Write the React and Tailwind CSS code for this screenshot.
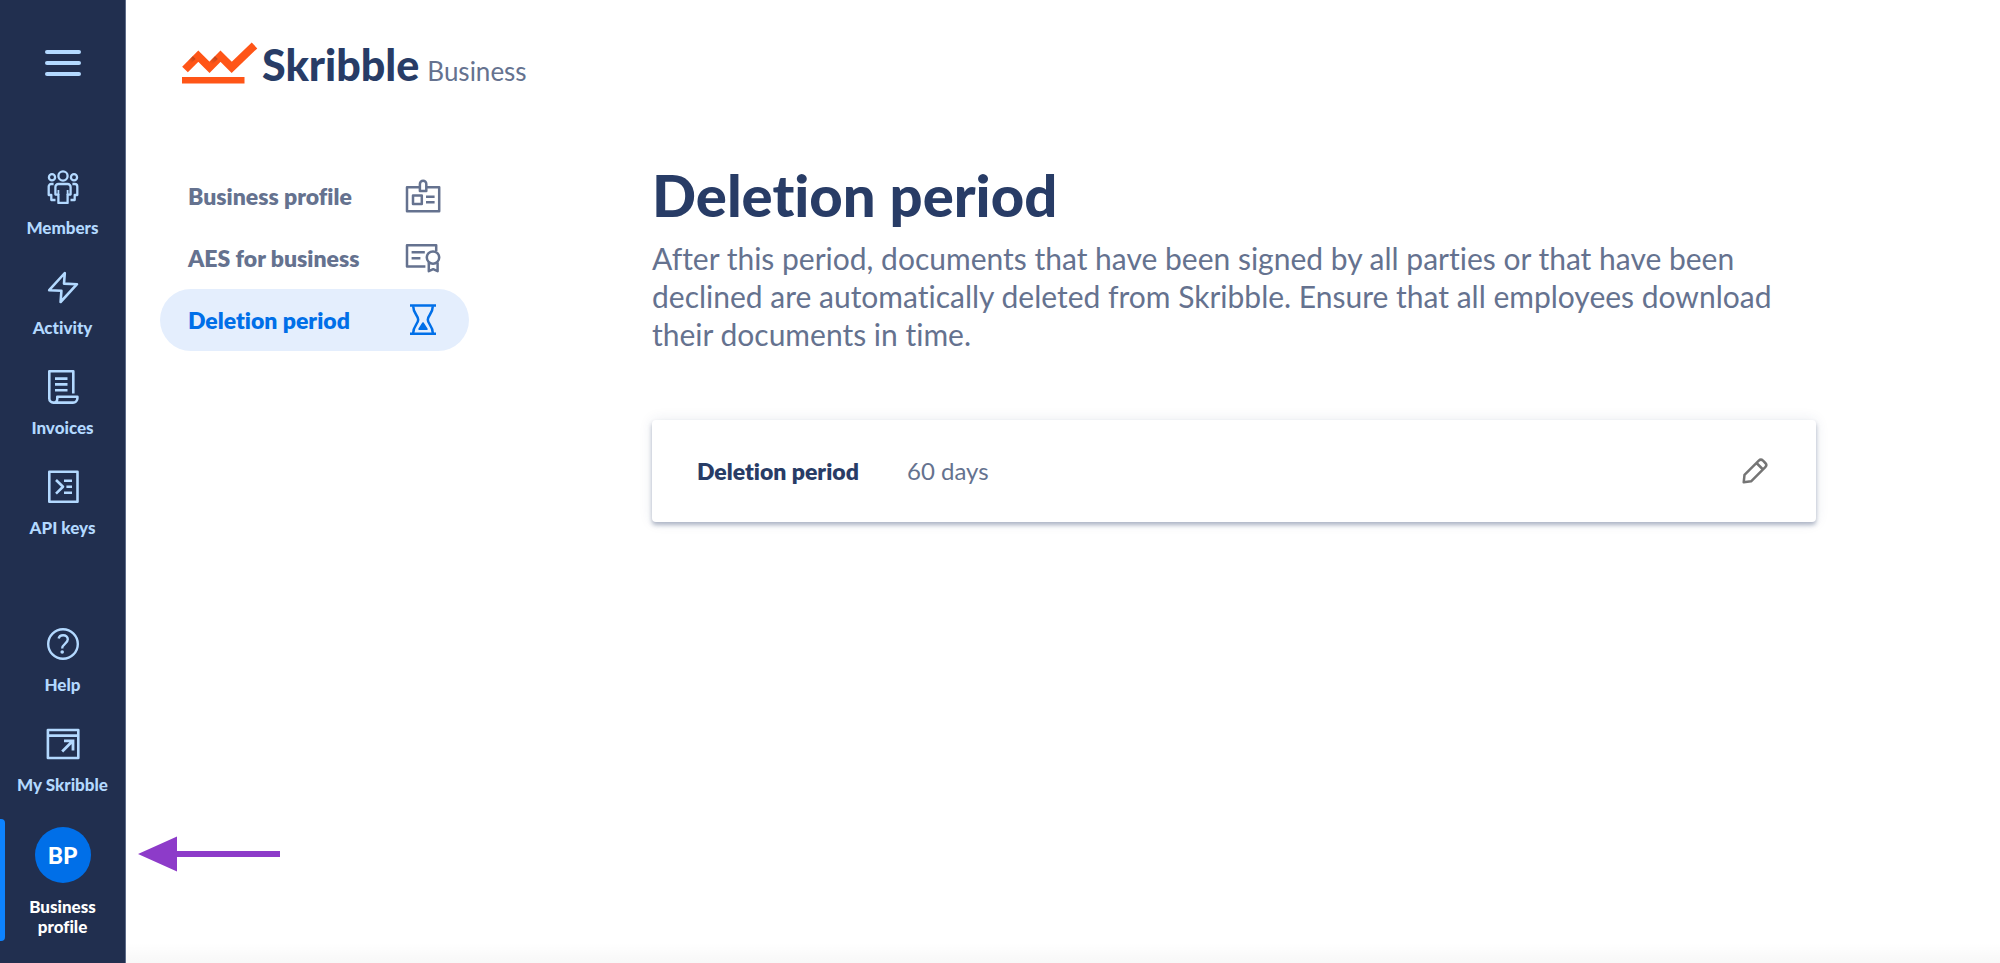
function MembersIcon() {
  return (
    <svg className="size-[34px]" viewBox="0 0 34 34" fill="none" stroke="currentColor" strokeWidth="2.3" strokeLinejoin="round" aria-hidden="true">
      <circle cx="17" cy="6" r="4.6" />
      <circle cx="6" cy="7.2" r="3.1" />
      <circle cx="28" cy="7.2" r="3.1" />
      <path d="M12.4 14h9.2a3 3 0 0 1 3 3v7.6h-3V33h-9.2v-8.4h-3V17a3 3 0 0 1 3-3Z" />
      <path d="M12.4 20v5M21.6 20v5" strokeWidth="1.8" />
      <path d="M7.6 14H5.2a2.5 2.5 0 0 0-2.5 2.5V25h2.6v5h4.2M26.4 14h2.4a2.5 2.5 0 0 1 2.5 2.5V25h-2.6v5h-4.2" />
    </svg>
  );
}

function ActivityIcon() {
  return (
    <svg className="size-[34px]" viewBox="0 0 34 34" fill="none" stroke="currentColor" strokeWidth="2.6" strokeLinejoin="round" aria-hidden="true">
      <path d="M18.8 3 3.2 20.2l12.2.6-.8 11.2L31 14.2l-13-.6Z" />
    </svg>
  );
}

function InvoicesIcon() {
  return (
    <svg className="size-[34px]" viewBox="0 0 34 34" fill="none" stroke="currentColor" strokeWidth="2.6" strokeLinejoin="round" aria-hidden="true">
      <path d="M27.3 23.4V1.3H3.3v27.3a4 4 0 0 0 4 4H27a4.4 4.4 0 0 0 4.4-4.4v-1.5H11.3v2a4 4 0 0 1-4 4" />
      <path d="M9 8.6h12.5M9 14.4h12.5M9 20.2h12.5" />
    </svg>
  );
}

function ApiIcon() {
  return (
    <svg className="size-[34px]" viewBox="0 0 34 34" fill="none" stroke="currentColor" strokeWidth="2.6" strokeLinejoin="round" aria-hidden="true">
      <path d="M3.3 1.7h28.2v30H3.3Z" />
      <path d="m10 10 7 6.8-7 6.8M18 10.7h8M20.4 16.7H26M18 22.7h8" />
    </svg>
  );
}

function HelpIcon() {
  return (
    <svg className="size-[34px]" viewBox="0 0 34 34" fill="none" stroke="currentColor" strokeWidth="2.4" aria-hidden="true">
      <circle cx="17" cy="17" r="14.8" />
      <path d="M12.6 11.6c.5-2.2 2.2-3.4 4.5-3.4 2.8 0 4.7 1.7 4.7 4.1 0 4.3-5.6 4.3-5.6 9.3" />
      <circle cx="16.2" cy="25" r="1.8" fill="currentColor" stroke="none" />
    </svg>
  );
}

function WindowIcon() {
  return (
    <svg className="size-[34px]" viewBox="0 0 34 34" fill="none" stroke="currentColor" strokeWidth="2.6" aria-hidden="true">
      <path d="M1.9 3h30.4v28H1.9ZM1.9 8.6h30.4" strokeLinejoin="round" />
      <path d="M16.2 24.4 26.4 14.2M18 13.8h9v9.6" strokeWidth="2.8" />
    </svg>
  );
}

function BadgeIcon() {
  return (
    <svg className="size-9" viewBox="0 0 36 36" fill="none" stroke="currentColor" strokeWidth="2.5" strokeLinejoin="round" aria-hidden="true">
      <path d="M14.8 9.3H2v24h32.2v-24H21.4" />
      <path d="M14.9 12.9V6a3.2 3.2 0 0 1 6.4 0v6.9Z" />
      <path d="M8 17.6h8.8V26H8ZM21 18.8h8.6M21 24.2h8.6" />
    </svg>
  );
}

function CertificateIcon() {
  return (
    <svg className="size-9" viewBox="0 0 36 36" fill="none" stroke="currentColor" strokeWidth="2.5" strokeLinejoin="round" aria-hidden="true">
      <path d="M20.4 26.4H2V5.3h29.2v6" />
      <path d="M6.6 12.2h13.2M6.6 18.3h8.8" />
      <circle cx="28" cy="17.6" r="6.2" />
      <path d="M23.8 22.6v8.6l4.4-2 4.4 2v-8.6" />
    </svg>
  );
}

function HourglassIcon() {
  return (
    <svg className="size-9" viewBox="0 0 36 36" fill="none" stroke="currentColor" strokeWidth="2.5" strokeLinejoin="round" aria-hidden="true">
      <path d="M5 3.6h26M5 31.8h26" />
      <path d="M8.2 4.3c0 7.2 5 9 5 13.4s-5 6.2-5 13.4M27.8 4.3c0 7.2-5 9-5 13.4s5 6.2 5 13.4" />
      <path d="M18 21 22 27.1h-8Z" fill="currentColor" strokeWidth="1.6" />
    </svg>
  );
}

function PencilIcon() {
  return (
    <svg className="size-7" viewBox="0 0 28 28" fill="none" stroke="currentColor" strokeWidth="2.5" strokeLinejoin="round" aria-hidden="true">
      <path d="M2.7 25.3 3.5 17.8 17.8 3.7a3 3 0 0 1 4.2 0l2.3 2.3a3 3 0 0 1 0 4.2L10.1 24.3ZM15.5 6l6.5 6.5" />
    </svg>
  );
}

function LogoMark() {
  return (
    <svg className="h-11 w-[76px]" viewBox="0 0 76 44" fill="none" aria-hidden="true">
      <defs>
        <linearGradient id="foldA" gradientUnits="userSpaceOnUse" x1="5" y1="24" x2="14" y2="15">
          <stop offset="0.35" stopColor="#b8431d" stopOpacity="0" />
          <stop offset="1" stopColor="#a83c18" />
        </linearGradient>
        <linearGradient id="foldB" gradientUnits="userSpaceOnUse" x1="27" y1="26" x2="37" y2="15">
          <stop offset="0.3" stopColor="#b8431d" stopOpacity="0" />
          <stop offset="1" stopColor="#a83c18" />
        </linearGradient>
      </defs>
      <path d="M3 27.5 16.3 14.2 27.5 25.4 38.5 14.2 49.7 25.4 72.5 3.5" stroke="#ff5517" strokeWidth="8" />
      <path d="M5.6 19.3 10.8 14.2 13.6 17 5.6 24.8Z" fill="url(#foldA)" />
      <path d="M27.5 19.6 33 14.2 35.8 17 27.5 25.2Z" fill="url(#foldB)" />
      <path d="M0 35h62.5v6.5H0Z" fill="#ff5517" />
    </svg>
  );
}

const primary = [
  ["Members", MembersIcon],
  ["Activity", ActivityIcon],
  ["Invoices", InvoicesIcon],
  ["API keys", ApiIcon],
];

const secondary = [
  ["Help", HelpIcon],
  ["My Skribble", WindowIcon],
];

const settings = [
  ["Business profile", BadgeIcon, false],
  ["AES for business", CertificateIcon, false],
  ["Deletion period", HourglassIcon, true],
];

function RailLink({ label, Icon }) {
  return (
    <a href="#" className="flex h-[100px] flex-col items-center gap-[14px] pt-2">
      <Icon />
      <span className="text-[17px] leading-5 font-black">{label}</span>
    </a>
  );
}

export default function App() {
  return (
    <div className="relative flex min-h-screen bg-white font-[Lato,sans-serif] text-[#65728f] [font-variant-ligatures:none]">
      <aside className="w-[126px] shrink-0 border-r border-[#5d6b88] bg-[#212f4f] text-[#b3d9ff]">
        <button type="button" aria-label="Menu" className="mx-auto mt-[50px] flex w-9 flex-col gap-[7px]">
          <span className="h-1 w-full rounded-full bg-current" />
          <span className="h-1 w-full rounded-full bg-current" />
          <span className="h-1 w-full rounded-full bg-current" />
        </button>
        <nav className="mt-[86px]" aria-label="Main">
          {primary.map(([label, Icon]) => (
            <RailLink key={label} label={label} Icon={Icon} />
          ))}
        </nav>
        <nav className="mt-[57px]" aria-label="Account">
          {secondary.map(([label, Icon]) => (
            <RailLink key={label} label={label} Icon={Icon} />
          ))}
          <a href="#" aria-current="page" className="relative flex flex-col items-center gap-[14px] pt-2 pb-1 text-white">
            <span className="absolute inset-y-0 left-0 w-[5px] rounded-r-sm bg-[#0d83ff]" />
            <span className="flex size-14 items-center justify-center rounded-full bg-[#006fe8] text-[23px] font-black">BP</span>
            <span className="w-20 text-center text-[17px] leading-5 font-black">Business profile</span>
            <svg className="absolute top-[17px] left-full ml-3 h-9 w-[144px]" viewBox="0 0 144 36" aria-hidden="true">
              <path d="M1 18 40 .5V15h103v6H40v14.500Z" fill="#8d3bc9" />
            </svg>
          </a>
        </nav>
      </aside>

      <div className="min-w-0 flex-1">
        <header className="flex pt-[42px] pl-14">
          <a href="#" className="flex items-start text-[#283c66]">
            <LogoMark />
            <span className="flex h-11 items-baseline gap-2 pl-1">
              <span className="text-[43px] leading-[46px] font-black">Skribble</span>
              <span className="text-[26px] leading-8 text-[#65728f]">Business</span>
            </span>
          </a>
        </header>
        <div className="flex pt-[73px] pr-[184px] pl-[34px]">
          <nav className="mt-[6px] w-[309px] shrink-0" aria-label="Settings">
            {settings.map(([label, Icon, active]) => (
              <a
                key={label}
                href="#"
                className={
                  active
                    ? "flex h-[62px] items-center justify-between rounded-full bg-[#e4eefd] pr-7 pl-7 text-[23px] font-extrabold text-[#006fe8]"
                    : "flex h-[62px] items-center justify-between pr-7 pl-7 text-[23px] font-extrabold"
                }
              >
                {label}
                <Icon />
              </a>
            ))}
          </nav>
          <main className="ml-[183px] min-w-0 flex-1">
            <h1 className="text-[58px] leading-[72px] font-black text-[#283c66]">Deletion period</h1>
            <p className="mt-2 pr-8 text-[30px] leading-[38px]">
              After this period, documents that have been signed by all parties or that have been declined are
              automatically deleted from Skribble. Ensure that all employees download their documents in time.
            </p>
            <section className="mt-[67px] flex h-[102px] items-center rounded-[4px] bg-white pr-[47px] pl-[45px] shadow-[0_3px_4px_rgba(40,60,104,0.35),0_0_14px_rgba(40,60,104,0.10)]">
              <h2 className="w-[210px] text-[23px] font-extrabold text-[#283c66]">Deletion period</h2>
              <p className="flex-1 text-[24px]">60 days</p>
              <button type="button" aria-label="Edit deletion period" className="text-[#757575]">
                <PencilIcon />
              </button>
            </section>
          </main>
        </div>
      </div>
      <div className="pointer-events-none absolute right-0 bottom-0 left-[126px] h-5 bg-linear-to-b from-transparent to-black/3" />
    </div>
  );
}
